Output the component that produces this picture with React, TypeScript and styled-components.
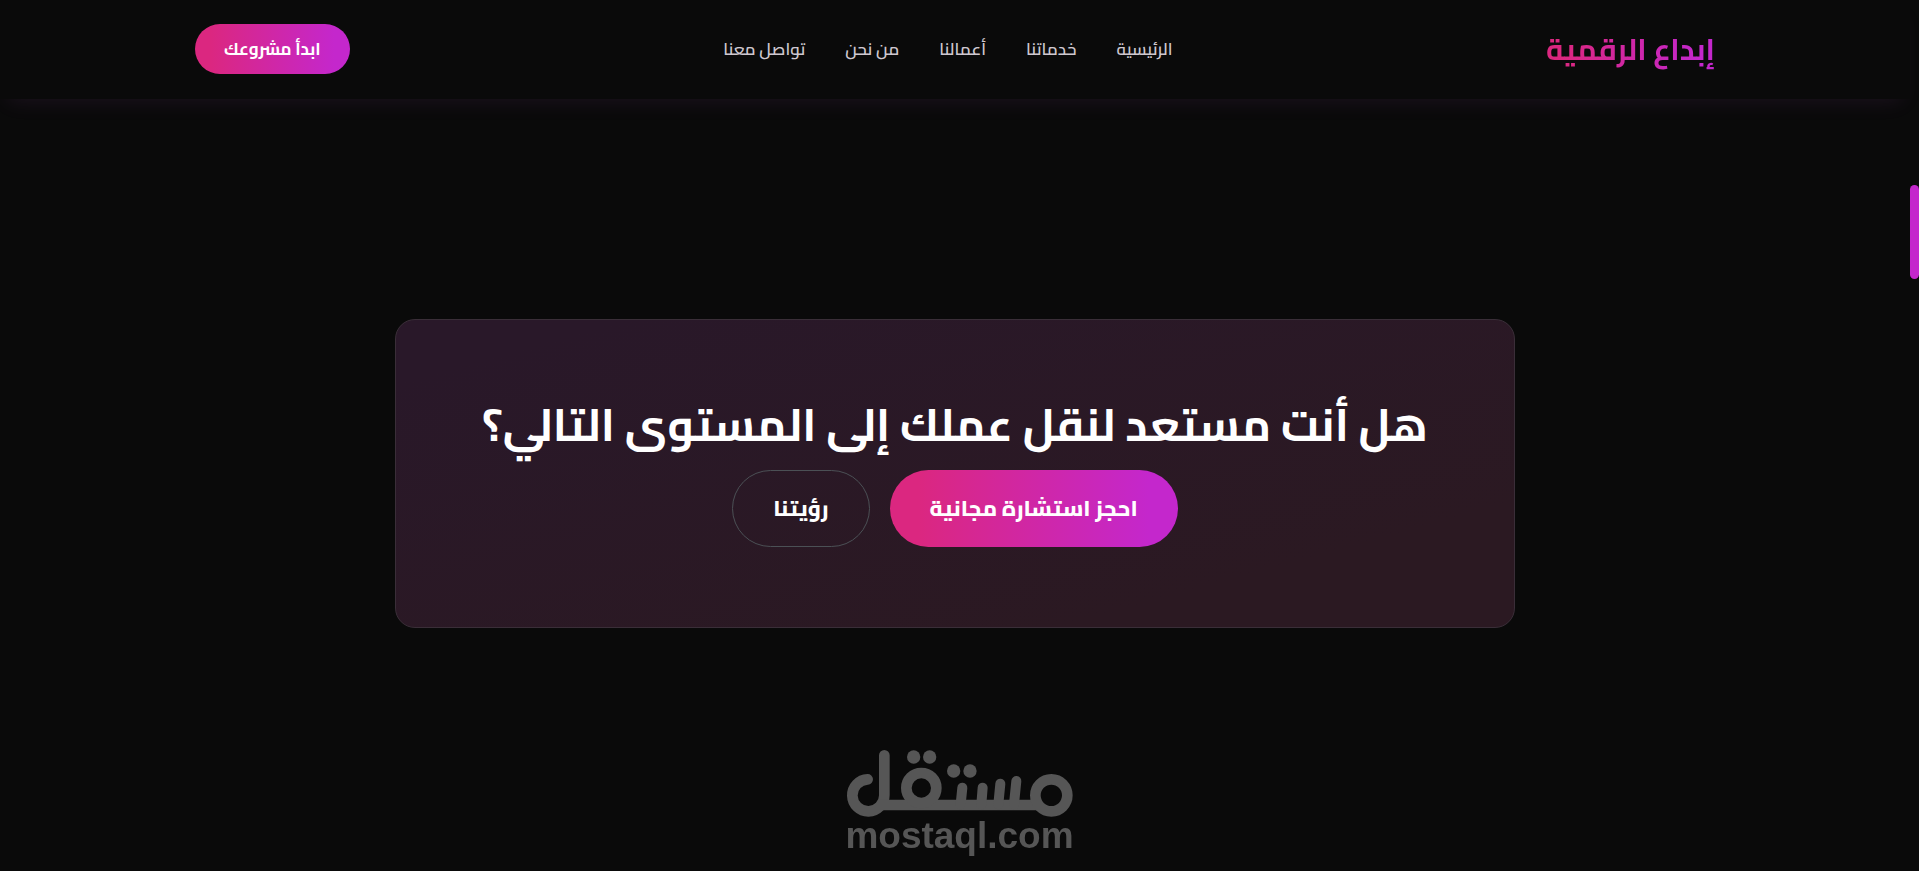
import React from 'react';
import styled, { createGlobalStyle } from 'styled-components';

const GlobalStyle = createGlobalStyle`
  *, *::before, *::after { box-sizing: border-box; }
  body {
    margin: 0;
    background: #0a0a0a;
    color: #fff;
    font-family: Cairo, 'DejaVu Sans Condensed', 'DejaVu Sans', sans-serif;
  }
`;

const brandGradient = 'linear-gradient(to left, #c427cc 10%, #db2780 90%)';

const Page = styled.div`
  display: flex;
  min-height: 100vh;
`;

const Content = styled.div`
  flex: 1;
  min-width: 0;
`;

const ScrollTrack = styled.div`
  flex: none;
  width: 9px;
  padding-top: 185px;
`;

const ScrollThumb = styled.div`
  height: 94px;
  border-radius: 5px;
  background: #c427cc;
`;

const Header = styled.header`
  padding: 24px;
  border-bottom: 1px solid #0a0a0a;
  box-shadow: 0 10px 20px -8px rgba(192, 100, 211, 0.1);
`;

const HeaderInner = styled.div`
  display: flex;
  align-items: center;
  justify-content: space-between;
  max-width: 1520px;
  margin: 0 auto;
`;

const Logo = styled.a`
  font-size: 30px;
  font-weight: 700;
  line-height: 50px;
  text-decoration: none;
  color: transparent;
  background: ${brandGradient};
  background-clip: text;
`;

const Nav = styled.nav`
  display: flex;
  gap: 40px;
`;

const NavLink = styled.a`
  font-size: 17px;
  font-weight: 600;
  line-height: 28px;
  color: #cfc8d0;
  text-decoration: none;
`;

const Button = styled.button<{ $size: 'small' | 'large'; $outline?: boolean }>`
  padding: ${(p) => (p.$size === 'small' ? '0 29px' : '0 40px')};
  border: ${(p) => (p.$outline ? '1px solid #4b5055' : '0')};
  border-radius: 50px;
  background: ${(p) => (p.$outline ? 'transparent' : brandGradient)};
  color: #fff;
  font-family: inherit;
  font-size: ${(p) => (p.$size === 'small' ? 17 : 22)}px;
  font-weight: ${(p) => (p.$size === 'small' ? 700 : 800)};
  line-height: ${(p) => (p.$size === 'small' ? 50 : p.$outline ? 75 : 77)}px;
  cursor: pointer;
`;

const Card = styled.section`
  max-width: 1120px;
  margin: 220px auto;
  padding: 80px 24px;
  border: 1px solid #3a2e38;
  border-radius: 20px;
  background: linear-gradient(to bottom right, #291829 10%, #2b1922 80%);
  text-align: center;
`;

const Title = styled.h2`
  margin: 0 0 20px;
  font-size: 45px;
  font-weight: 700;
  line-height: 50px;
`;

const Actions = styled.div`
  display: flex;
  justify-content: center;
  gap: 20px;
`;

const Watermark = styled.div`
  position: fixed;
  bottom: 0;
  left: 0;
  right: 0;
  display: flex;
  flex-direction: column;
  align-items: center;
  padding-bottom: 16px;
  color: #565656;
  font-family: 'Liberation Sans', sans-serif;
  font-size: 37px;
  font-weight: 700;
  line-height: 38px;
  pointer-events: none;
`;

const Emblem = styled.svg`
  display: block;
  width: 227px;
  height: 67px;
`;

const links = ['الرئيسية', 'خدماتنا', 'أعمالنا', 'من نحن', 'تواصل معنا'];

export default function App() {
  return (
    <>
      <GlobalStyle />
      <Page>
        <Content dir="rtl" lang="ar">
          <Header>
            <HeaderInner>
              <Logo href="#">إبداع الرقمية</Logo>
              <Nav>
                {links.map((label) => (
                  <NavLink key={label} href="#">
                    {label}
                  </NavLink>
                ))}
              </Nav>
              <Button $size="small">ابدأ مشروعك</Button>
            </HeaderInner>
          </Header>
          <main>
            <Card>
              <Title>هل أنت مستعد لنقل عملك إلى المستوى التالي؟</Title>
              <Actions>
                <Button $size="large">احجز استشارة مجانية</Button>
                <Button $size="large" $outline>
                  رؤيتنا
                </Button>
              </Actions>
            </Card>
          </main>
        </Content>
        <ScrollTrack aria-hidden="true">
          <ScrollThumb />
        </ScrollTrack>
      </Page>
      <Watermark>
        <Emblem viewBox="78 57 681 201" role="img" aria-label="مستقل">
          <g fill="none" stroke="currentColor" strokeWidth="32" strokeLinecap="round">
            <path d="M143 145A48 48 0 1 0 193 193V73" />
            <path strokeLinecap="butt" d="M180 222H658" />
            <circle cx="694" cy="193" r="48" />
            <circle cx="304" cy="171" r="45" />
            <path strokeWidth="30" d="M427 170L422 220M488 170L484 220M541 158L535 220M589 150L582 220" />
          </g>
          <g fill="currentColor">
            <circle cx="281" cy="78" r="20" />
            <circle cx="329" cy="78" r="20" />
            <circle cx="401" cy="120" r="20" />
            <circle cx="450" cy="120" r="20" />
          </g>
        </Emblem>
        <span>mostaql.com</span>
      </Watermark>
    </>
  );
}
